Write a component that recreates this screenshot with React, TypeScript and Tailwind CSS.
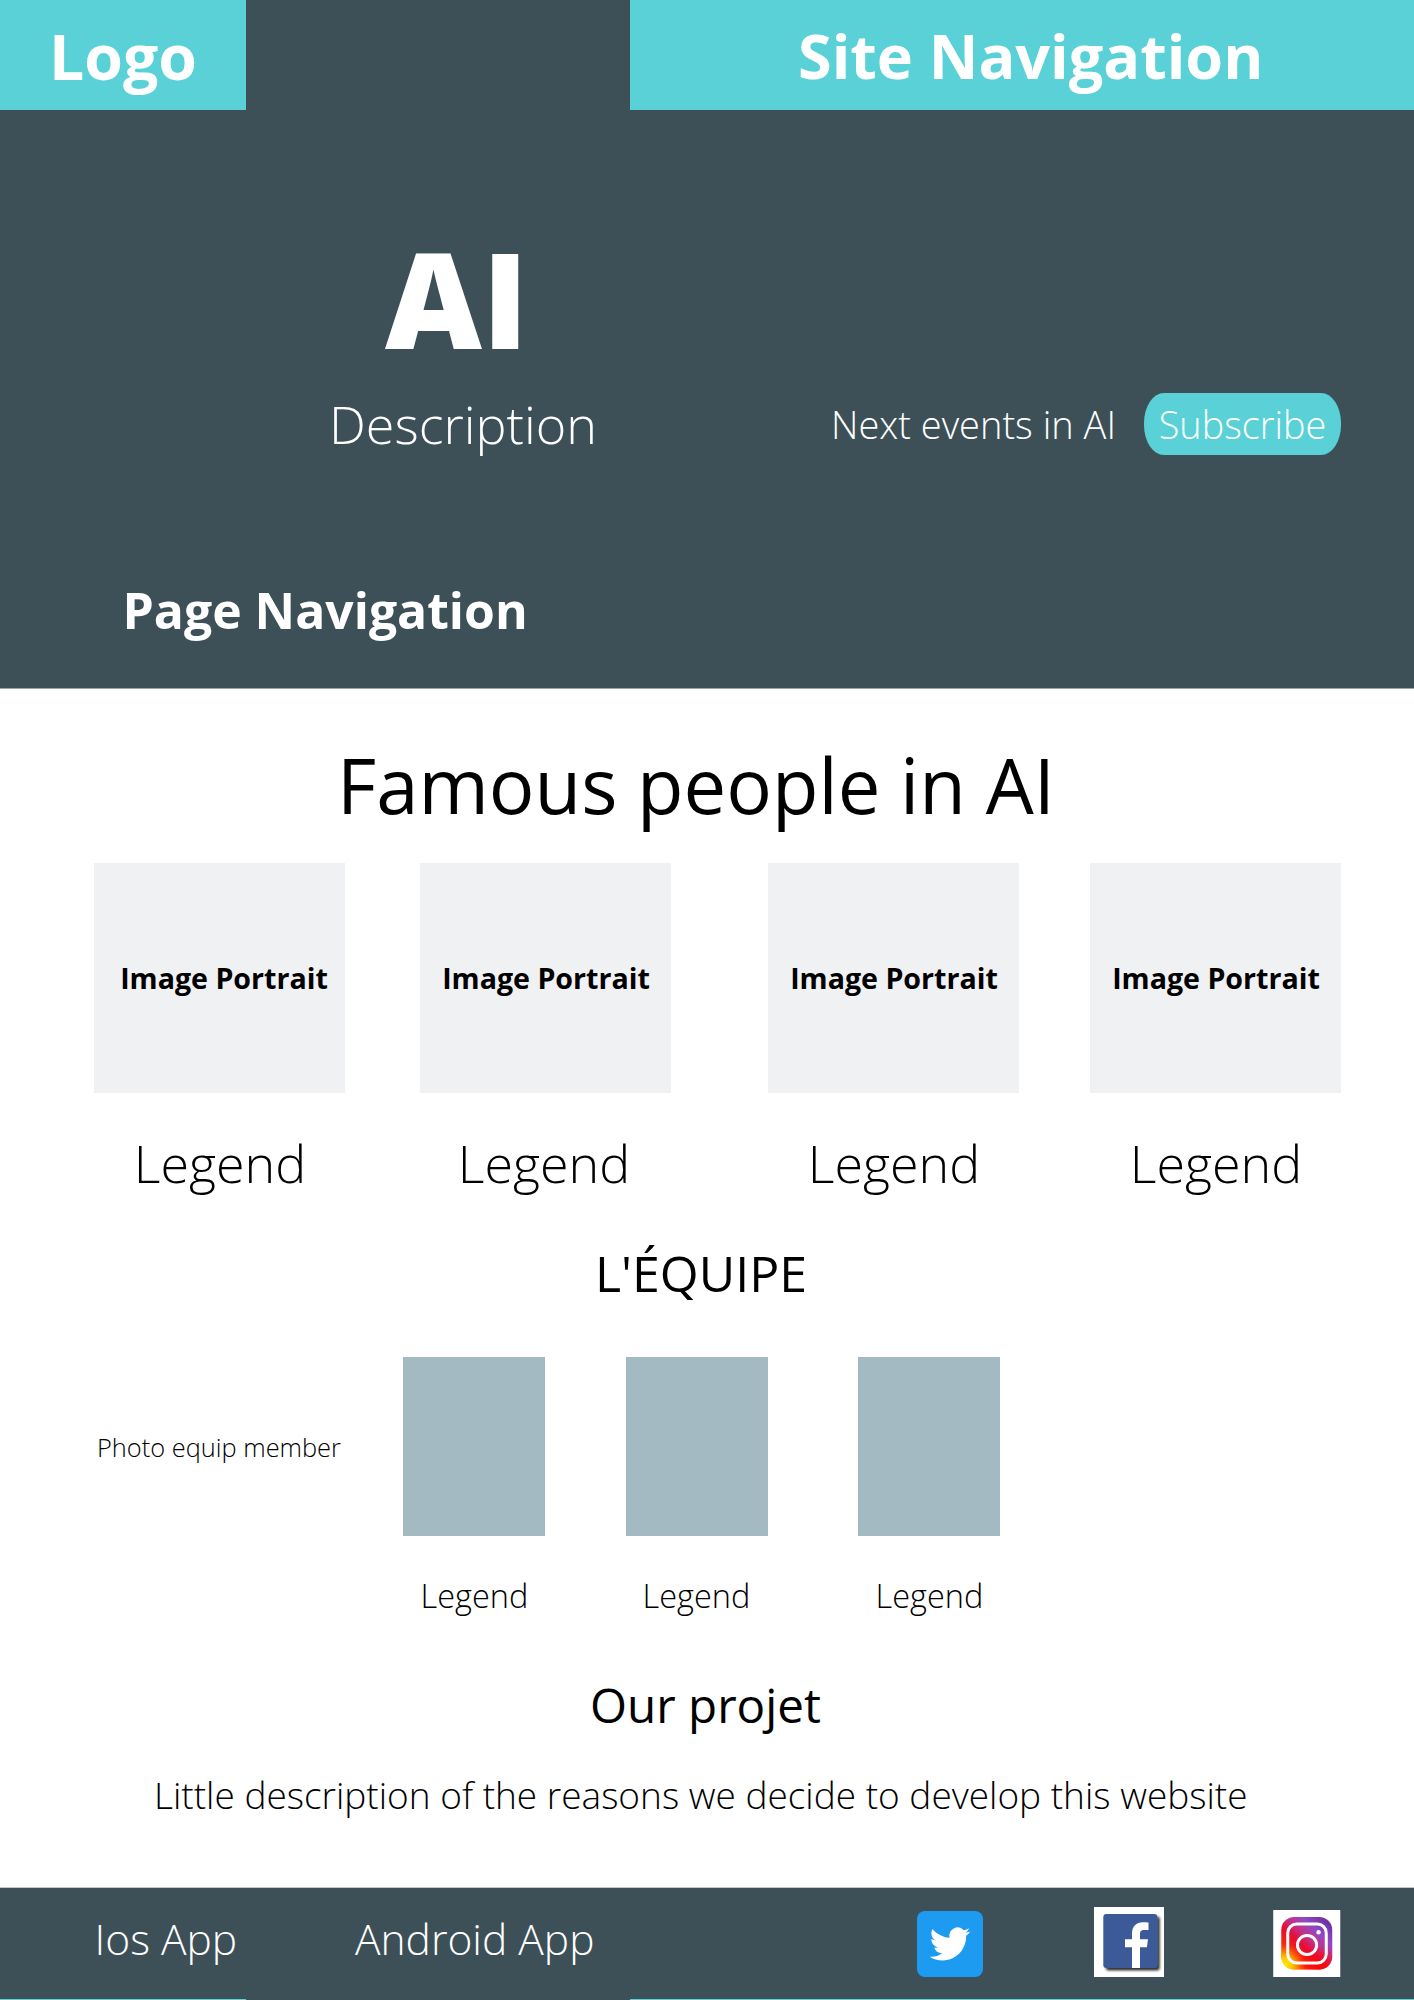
import React from "react";

const portraits = [
  { box: "ml-[94px]", caption: "pl-[9px]", legend: "pl-px" },
  { box: "ml-[75px]", caption: "pl-px", legend: "pr-[3px]" },
  { box: "ml-[97px]", caption: "pl-px", legend: "pl-px" },
  { box: "ml-[71px]", caption: "pl-px", legend: "pl-px" },
];

const members = [
  { box: "ml-[62px]", legend: "pl-px" },
  { box: "ml-[81px]", legend: "pr-px" },
  { box: "ml-[90px]", legend: "pl-px" },
];

function TwitterIcon() {
  return (
    <svg className="ml-[324px] mt-[23px] h-[66px] w-[66px] shrink-0" viewBox="0 0 66 66">
      <rect width="66" height="66" rx="8" fill="#1d9bf0" />
      <path
        transform="translate(12.7 12.7) scale(1.69)"
        fill="#fff"
        d="M23.953 4.57a10 10 0 01-2.825.775 4.958 4.958 0 002.163-2.723c-.951.555-2.005.959-3.127 1.184a4.92 4.92 0 00-8.384 4.482C7.69 8.095 4.067 6.13 1.64 3.162a4.822 4.822 0 00-.666 2.475c0 1.71.87 3.213 2.188 4.096a4.904 4.904 0 01-2.228-.616v.06a4.923 4.923 0 003.946 4.827 4.996 4.996 0 01-2.212.085 4.936 4.936 0 004.604 3.417 9.867 9.867 0 01-6.102 2.105c-.39 0-.779-.023-1.17-.067a13.995 13.995 0 007.557 2.209c9.053 0 13.998-7.496 13.998-13.985 0-.21 0-.42-.015-.63A9.935 9.935 0 0024 4.59z"
      />
    </svg>
  );
}

function FacebookIcon() {
  return (
    <svg className="ml-[111px] mt-[19px] h-[70px] w-[70px] shrink-0" viewBox="0 0 70 70">
      <defs>
        <filter id="fb-shadow" x="-20%" y="-20%" width="150%" height="150%">
          <feDropShadow dx="2.5" dy="2.5" stdDeviation="1.3" floodColor="#000" floodOpacity="0.8" />
        </filter>
      </defs>
      <rect width="70" height="70" fill="#fff" />
      <rect x="9.3" y="7" width="54" height="54" rx="3" fill="#3d5a98" filter="url(#fb-shadow)" />
      <path
        fill="#fff"
        d="M38 61V40.3h-7v-8h7v-5.6c0-7.3 4.3-11.4 10.8-11.4 2.3 0 4.4.1 5.7.3v7.4h-4.3c-3.3 0-4.2 1.6-4.2 4v5.3h8l-1.1 8H46V61z"
      />
    </svg>
  );
}

function InstagramIcon() {
  return (
    <svg className="ml-[109px] mt-[22px] h-[67px] w-[67.5px] shrink-0" viewBox="0 0 67 67">
      <defs>
        <linearGradient id="ig-base" x1="0.1" y1="0.95" x2="0.9" y2="0.05">
          <stop offset="0" stopColor="#ff9a00" />
          <stop offset="0.22" stopColor="#fb2a0a" />
          <stop offset="0.42" stopColor="#ea0b2c" />
          <stop offset="0.6" stopColor="#c0328f" />
          <stop offset="0.76" stopColor="#9248c4" />
          <stop offset="1" stopColor="#6b2fa0" />
        </linearGradient>
        <radialGradient id="ig-warm" cx="0.06" cy="0.92" r="0.42">
          <stop offset="0" stopColor="#ffee00" />
          <stop offset="0.35" stopColor="#ffc800" />
          <stop offset="1" stopColor="#ff5a00" stopOpacity="0" />
        </radialGradient>
        <radialGradient id="ig-red" cx="0.75" cy="1" r="0.45">
          <stop offset="0" stopColor="#ff0505" />
          <stop offset="1" stopColor="#ff0505" stopOpacity="0" />
        </radialGradient>
      </defs>
      <rect width="67" height="67" fill="#fff" />
      <rect x="8" y="7" width="51" height="52.5" rx="13" fill="url(#ig-base)" />
      <rect x="8" y="7" width="51" height="52.5" rx="13" fill="url(#ig-red)" />
      <rect x="8" y="7" width="51" height="52.5" rx="13" fill="url(#ig-warm)" />
      <rect x="14.5" y="14" width="38.5" height="39" rx="9" fill="none" stroke="#fff" strokeWidth="3" />
      <circle cx="33.8" cy="35" r="9.6" fill="none" stroke="#fff" strokeWidth="3" />
      <circle cx="45.3" cy="22.2" r="2.2" fill="#fff" />
    </svg>
  );
}

export default function App() {
  return (
    <div className="flex h-[2000px] w-[1414px] flex-col overflow-hidden whitespace-nowrap bg-white font-['Open_Sans',sans-serif] text-black">
      <header className="h-[688px] shrink-0 bg-[#3d5057] text-white">
        <div className="flex h-[110px] justify-between font-bold leading-[110px]">
          <div className="w-[246px] bg-[#5ad1d7] pl-[49px] pt-px text-[62.5px] leading-[109.5px]">Logo</div>
          <nav className="w-[784px] bg-[#5ad1d7] pl-[168px] pt-px text-[61.1px] leading-[109px]">Site Navigation</nav>
        </div>
        <h1 className="ml-[385px] mt-[117px] text-[133.5px] font-extrabold leading-[140px]">AI</h1>
        <div className="mt-[26px] flex h-[62px] font-light leading-[62px]">
          <p className="ml-[329px] w-[501px] text-[52.1px]">Description</p>
          <p className="w-[314px] pl-px text-[38px]">Next events in AI</p>
          <button className="w-[197px] rounded-[20px/30px] bg-[#5ad1d7] pt-px text-center text-[37.8px]">Subscribe</button>
        </div>
        <nav className="ml-[122.5px] mt-[125px] text-[49.9px] font-bold leading-[60px]">Page Navigation</nav>
      </header>

      <main className="h-[1199px] shrink-0 border-t border-[#98a4a7] pt-[46px]">
        <h2 className="ml-[337px] text-[76px] leading-[100px]">Famous people in AI</h2>
        <div className="mt-[28px] flex">
          {portraits.map((p, i) => (
            <figure key={i} className={`w-[251px] shrink-0 text-center ${p.box}`}>
              <div className={`h-[230px] bg-[#f0f1f3] text-[28.6px] font-bold leading-[230px] ${p.caption}`}>
                Image Portrait
              </div>
              <figcaption className={`mt-[40px] text-[52px] font-light leading-[60px] ${p.legend}`}>Legend</figcaption>
            </figure>
          ))}
        </div>
        <h2 className="ml-[595px] mt-[50px] text-[50px] leading-[60px]">L'ÉQUIPE</h2>
        <div className="mt-[54px] flex font-light">
          <p className="ml-[97px] w-[244px] pt-[72px] text-[25.4px] leading-[36px]">Photo equip member</p>
          {members.map((m, i) => (
            <figure key={i} className={`w-[142px] shrink-0 text-center ${m.box}`}>
              <div className="h-[179px] bg-[#a4bac2]" />
              <figcaption className={`mt-[40px] text-[32.5px] leading-[40px] ${m.legend}`}>Legend</figcaption>
            </figure>
          ))}
        </div>
        <h2 className="ml-[590px] mt-[59px] text-[47.6px] leading-[60px]">Our projet</h2>
        <p className="ml-[154px] mt-[35px] text-[37px] font-light leading-[50px]">
          Little description of the reasons we decide to develop this website
        </p>
      </main>

      <footer className="shrink-0">
        <div className="flex h-[112px] items-start border-t border-[#c3c9cb] bg-[#3d5057] font-light text-white">
          <p className="ml-[94.5px] mt-[21px] w-[260.5px] text-[42.5px] leading-[60px]">Ios App</p>
          <p className="mt-[21px] w-[238px] text-[42.5px] leading-[60px]">Android App</p>
          <TwitterIcon />
          <FacebookIcon />
          <InstagramIcon />
        </div>
        <div className="flex h-px justify-between bg-[#3d5057]">
          <div className="w-[246px] bg-[#5ad1d7]" />
          <div className="w-[784px] bg-[#5ad1d7]" />
        </div>
      </footer>
    </div>
  );
}
